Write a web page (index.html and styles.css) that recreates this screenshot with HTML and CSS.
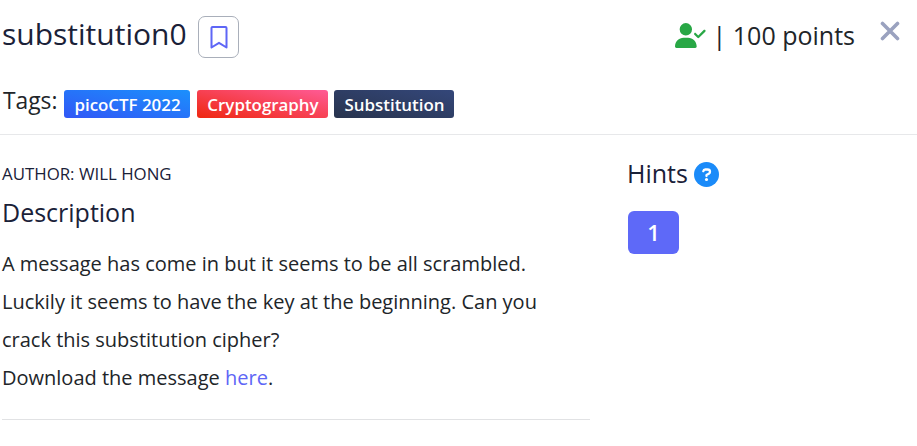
FILE: index.html
```html
<!DOCTYPE html>
<html lang="en">
<head>
<meta charset="utf-8">
<title>substitution0</title>
<link rel="stylesheet" href="styles.css">
</head>
<body>
<header class="header">
  <div class="title-row">
    <h1 class="title">substitution0</h1>
    <button class="bookmark" aria-label="Bookmark"><svg width="18" height="24" viewBox="0 0 18 24"><path d="M1.500 22.500V3a1 1 0 0 1 1-1h13a1 1 0 0 1 1 1v19.500L9 17.800z" fill="none" stroke="#5e66f6" stroke-width="2" stroke-linejoin="round"/></svg></button>
    <div class="points">
      <svg class="solved" width="31" height="25" viewBox="0 0 640 512" fill="#28a745"><path d="M96 128a128 128 0 1 1 256 0A128 128 0 1 1 96 128zM0 482.300C0 383.800 79.800 304 178.300 304h91.400C368.200 304 448 383.800 448 482.300c0 16.400-13.300 29.700-29.700 29.700H29.700C13.300 512 0 498.700 0 482.300zM625 177L497 305c-9.400 9.400-24.600 9.400-33.900 0l-64-64c-9.400-9.400-9.400-24.600 0-33.900s24.600-9.400 33.900 0l47 47L591 143c9.400-9.400 24.600-9.400 33.900 0s9.400 24.600 0 33.900z"/></svg>
      <span class="score">| 100 points</span>
    </div>
    <button class="close" aria-label="Close"><svg width="20" height="20" viewBox="0 0 20 20"><path d="M2.500 2.500l15 15M17.500 2.500l-15 15" stroke="#9aa2bf" stroke-width="3.600" stroke-linecap="round"/></svg></button>
  </div>
  <div class="tags">
    <span class="tags-label">Tags:</span>
    <span class="tag event">picoCTF 2022</span>
    <span class="tag category">Cryptography</span>
    <span class="tag topic">Substitution</span>
  </div>
</header>
<main class="content">
  <section class="details">
    <p class="author">AUTHOR: WILL HONG</p>
    <h2 class="heading">Description</h2>
    <p class="description">A message has come in but it seems to be all scrambled.<br>Luckily it seems to have the key at the beginning. Can you<br>crack this substitution cipher?<br>Download the message <a href="#">here</a>.</p>
    <hr class="rule">
  </section>
  <aside class="hints">
    <div class="hints-title"><h2>Hints</h2><svg width="25" height="25" viewBox="0 0 25 25"><circle cx="12.500" cy="12.500" r="12.500" fill="#1b8bf9"/><path d="M9.300 9.200c.2-1 1-1.700 2-1.700h2.200c1.500 0 2.500 1 2.500 2.300 0 .9-.4 1.500-1.200 2L12.500 13v1" fill="none" stroke="#fff" stroke-width="2.300" stroke-linecap="round" stroke-linejoin="round"/><circle cx="12.500" cy="17.500" r="1.550" fill="#fff"/></svg></div>
    <button class="hint">1</button>
  </aside>
</main>
</body>
</html>
```

FILE: styles.css
```css
* { box-sizing: border-box; }
body { margin: 0; background: #fff; color: #212529; font-family: "Open Sans", "Noto Sans", sans-serif; overflow: hidden; }
h1, h2, p { margin: 0; font-weight: 400; color: #1a2138; }
button { font: inherit; padding: 0; border: 0; background: none; }
svg { display: block; }
.header { height: 135px; border-bottom: 1px solid #e7e8ea; }
.title-row { display: flex; height: 90px; padding: 16px 17px 0 2px; align-items: flex-start; }
.title { font-size: 30px; line-height: 36px; width: 196px; white-space: nowrap; }
.bookmark { width: 41px; height: 42px; border: 1px solid #a9afba; border-radius: 7px; display: grid; place-items: center; }
.points { margin-left: auto; display: flex; align-items: center; height: 39px; }
.score { font-size: 25px; line-height: 34px; padding-bottom: 2px; margin-left: 7px; white-space: nowrap; }
.close { margin: 5px 0 0 25px; }
.tags { display: flex; padding-left: 3px; height: 28px; align-items: center; }
.tags-label { font-size: 22.800px; line-height: 26px; width: 61px; margin-top: -7px; }
.tag { height: 28px; border-radius: 3px; margin-right: 7px; color: #fff; font-size: 16.900px; font-weight: 600; line-height: 29px; padding-left: 1px; text-align: center; white-space: nowrap; }
.event { width: 126px; background: linear-gradient(to top right, #3157f6, #1b90fc); }
.category { width: 131px; margin-right: 6px; background: linear-gradient(to top right, #ef2710, #ff5b96); }
.topic { width: 120px; background: linear-gradient(to top right, #28344e, #34477a); }
.content { display: flex; }
.details { width: 588px; margin: 0 37px 0 2px; padding-top: 27px; }
.author { font-size: 16.850px; line-height: 24px; }
.heading { font-size: 25px; line-height: 34px; margin-top: 9px; }
.description { font-size: 20px; line-height: 38px; margin-top: 16px; white-space: nowrap; color: #212529; }
.description a { color: #5e66f6; text-decoration: none; }
.rule { height: 1px; margin: 22px 0 0; border: 0; background: #e1e2e4; }
.hints { padding-top: 22px; }
.hints-title { display: flex; align-items: center; height: 34px; }
.hints h2 { font-size: 25px; line-height: 32px; padding-bottom: 2px; width: 67px; }
.hint { width: 51px; height: 43px; margin: 20px 0 0 1px; padding-bottom: 2px; border-radius: 6px; background: #5e69f8; color: #fff; font-size: 22px; font-weight: 600; }
```
